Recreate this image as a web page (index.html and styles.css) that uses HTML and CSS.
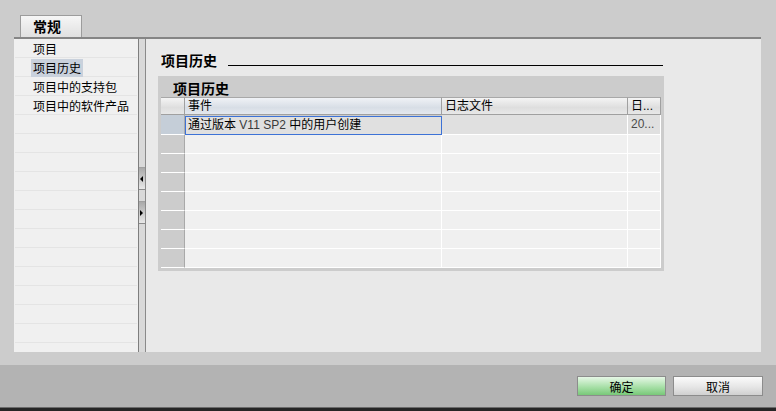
FILE: index.html
```html
<!DOCTYPE html>
<html>
<head>
<meta charset="utf-8">
<link rel="stylesheet" href="styles.css">
</head>
<body>
<div class="tabbar"><div class="tab">常规</div></div>
<div class="main">
  <div class="nav">
    <div class="nav-item"><span>项目</span></div>
    <div class="nav-item"><span class="sel">项目历史</span></div>
    <div class="nav-item"><span>项目中的支持包</span></div>
    <div class="nav-item"><span>项目中的软件产品</span></div>
    <div class="nav-item"></div>
    <div class="nav-item"></div>
    <div class="nav-item"></div>
    <div class="nav-item"></div>
    <div class="nav-item"></div>
    <div class="nav-item"></div>
    <div class="nav-item"></div>
    <div class="nav-item"></div>
    <div class="nav-item"></div>
    <div class="nav-item"></div>
    <div class="nav-item"></div>
    <div class="nav-item"></div>
    <div class="nav-item"></div>
  </div>
  <div class="splitter">
    <div class="split-btn"><i class="arr-left"></i></div>
    <div class="split-btn"><i class="arr-right"></i></div>
  </div>
  <div class="pane">
    <div class="hist-head"><span class="hist-title">项目历史</span><span class="rule"></span></div>
    <div class="group">
      <div class="group-title">项目历史</div>
      <div class="grid">
        <div class="row head">
          <div class="rh"></div>
          <div class="active">事件</div>
          <div>日志文件</div>
          <div>日...</div>
        </div>
        <div class="row first">
          <div class="rh"></div>
          <div class="selcell">通过版本 <span class="lat">V11 SP2</span> 中的用户创建</div>
          <div></div>
          <div class="dim">20...</div>
        </div>
        <div class="row"><div class="rh"></div><div></div><div></div><div></div></div>
        <div class="row"><div class="rh"></div><div></div><div></div><div></div></div>
        <div class="row"><div class="rh"></div><div></div><div></div><div></div></div>
        <div class="row"><div class="rh"></div><div></div><div></div><div></div></div>
        <div class="row"><div class="rh"></div><div></div><div></div><div></div></div>
        <div class="row"><div class="rh"></div><div></div><div></div><div></div></div>
        <div class="row"><div class="rh"></div><div></div><div></div><div></div></div>
      </div>
    </div>
  </div>
</div>
<div class="gap"></div>
<div class="footer">
  <button class="btn ok">确定</button>
  <button class="btn cancel">取消</button>
</div>
<div class="edge"></div>
</body>
</html>
```
FILE: styles.css
```css
html, body {
  margin: 0;
  padding: 0;
}
body {
  width: 776px;
  height: 411px;
  overflow: hidden;
  background: #cccccc;
  font-family: "Liberation Sans", "Noto Sans CJK SC", sans-serif;
  font-size: 12px;
  color: #000;
  display: flex;
  flex-direction: column;
}
.tabbar {
  height: 22px;
  padding: 15px 0 0 20px;
  display: flex;
  flex: none;
}
.tab {
  width: 62px;
  box-sizing: border-box;
  border: 1px solid #9c9c9c;
  border-bottom: 0;
  background: linear-gradient(#f6f6f6, #e0e0e0);
  font-family: "Noto Sans CJK SC", sans-serif;
  font-weight: bold;
  font-size: 14px;
  line-height: 21px;
  padding-left: 12px;
}
.main {
  margin-left: 14px;
  width: 747px;
  height: 315px;
  box-sizing: border-box;
  border-top: 2px solid #858585;
  display: flex;
  flex: none;
}
.nav {
  width: 124px;
  flex: none;
  background: #f0f0f0;
  overflow: hidden;
}
.nav-item {
  height: 19px;
  box-sizing: border-box;
  border-bottom: 1px solid #e4e4e4;
  margin: 0 1px;
  padding: 1px 0 0 16px;
  font-family: "Noto Sans CJK SC", sans-serif;
}
.nav-item span {
  display: inline-block;
  vertical-align: top;
  height: 18px;
  line-height: 18px;
  padding: 0 2px;
}
.nav-item .sel {
  background: #c9d1dc;
}
.splitter {
  width: 8px;
  flex: none;
  box-sizing: border-box;
  border-left: 1px solid #7e7e7e;
  border-right: 1px solid #8a8a8a;
  background: #d9d9d9;
  display: flex;
  flex-direction: column;
  gap: 11px;
  padding-top: 128px;
}
.split-btn {
  height: 23px;
  box-sizing: border-box;
  border-top: 1px solid #a0a0a0;
  border-bottom: 1px solid #8c8c8c;
  background: linear-gradient(#a9a9a9, #e8e8e8);
  display: flex;
  align-items: center;
  padding-left: 1px;
}
.arr-left {
  width: 0;
  height: 0;
  border-top: 3px solid transparent;
  border-bottom: 3px solid transparent;
  border-right: 3px solid #000;
}
.arr-right {
  width: 0;
  height: 0;
  border-top: 3px solid transparent;
  border-bottom: 3px solid transparent;
  border-left: 3px solid #000;
}
.pane {
  flex: 1;
  background: #e9e9e9;
  padding: 12px 97px 0 12px;
}
.hist-head {
  display: flex;
  align-items: center;
  height: 18px;
  padding-left: 3px;
  margin-bottom: 7px;
}
.hist-title {
  font-family: "Noto Sans CJK SC", sans-serif;
  font-size: 14px;
  font-weight: bold;
  line-height: 18px;
}
.rule {
  flex: 1;
  height: 1px;
  background: #000;
  align-self: flex-end;
  margin: 0 1px 3px 11px;
}
.group {
  background: #cccccc;
  padding: 4px 3px 3px 3px;
}
.group-title {
  font-family: "Noto Sans CJK SC", sans-serif;
  font-size: 14px;
  font-weight: bold;
  line-height: 17px;
  height: 17px;
  padding-left: 12px;
}
.grid {
  width: 500px;
}
.row {
  display: grid;
  grid-template-columns: 24px 257px 186px 33px;
  height: 19px;
}
.row > div {
  box-sizing: border-box;
  border-right: 1px solid #ffffff;
  border-bottom: 1px solid #ffffff;
  background: #f0f0f0;
  line-height: 18px;
  padding-left: 3px;
  overflow: hidden;
  white-space: nowrap;
}
.row > .rh {
  background: #cccccc;
  border-right: 1px solid #a9a9a9;
  padding: 0;
}
.row.head {
  height: 18px;
}
.row.head > div,
.row.head > .rh {
  background: linear-gradient(#f4f4f4, #dedede 60%, #e8e8e8);
  border-top: 1px solid #a8a8a8;
  border-right: 1px solid #a0a0a0;
  border-bottom: 1px solid #a0a0a0;
  line-height: 16px;
}
.row.head > .active {
  background: linear-gradient(#f0f2f6, #d8dee6 60%, #e4e8ee);
}
.row.first {
  height: 20px;
}
.row.first > div {
  background: #e0e0e0;
}
.row.first > .rh {
  background: #c5ced8;
}
.row.first > .selcell {
  margin-top: 1px;
  border: 1px solid #3d72d6;
  padding-left: 2px;
  line-height: 17px;
}
.lat {
  color: #3a3a3a;
}
.dim {
  color: #4a4a4a;
}
.gap {
  height: 13px;
  flex: none;
}
.footer {
  height: 42px;
  flex: none;
  box-sizing: border-box;
  background: #b3b3b3;
  display: flex;
  justify-content: flex-end;
  align-items: flex-start;
  gap: 7px;
  padding: 11px 13px 0 0;
}
.btn {
  width: 90px;
  height: 20px;
  box-sizing: border-box;
  border: 1px solid #8c8c8c;
  padding: 0;
  margin: 0;
  font-family: "Noto Sans CJK SC", sans-serif;
  font-size: 12px;
  line-height: 17px;
  color: #000;
}
.ok {
  width: 89px;
  background: linear-gradient(#e6f7e6, #a8e0a8 55%, #78c878);
}
.cancel {
  background: linear-gradient(#fbfbfb, #e6e6e6 55%, #d0d0d0);
}
.edge {
  height: 4px;
  flex: none;
  box-sizing: border-box;
  border-top: 1px solid #6b6b6b;
  background: #262626;
}
```
